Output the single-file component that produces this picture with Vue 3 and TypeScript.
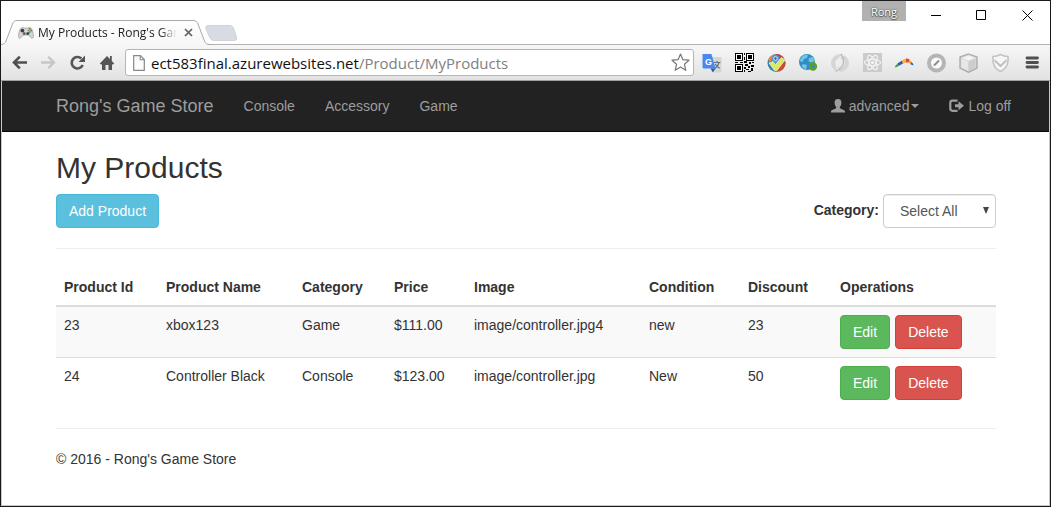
<script setup lang="ts">
import { ref } from 'vue'

interface Product {
  id: number
  name: string
  category: string
  price: string
  image: string
  condition: string
  discount: number
}

const navLinks: string[] = ['Console', 'Accessory', 'Game']
const category = ref<string>('Select All')
const categories: string[] = ['Select All', 'Console', 'Accessory', 'Game']
const columns: string[] = [
  'Product Id',
  'Product Name',
  'Category',
  'Price',
  'Image',
  'Condition',
  'Discount',
  'Operations',
]
const products: Product[] = [
  { id: 23, name: 'xbox123', category: 'Game', price: '$111.00', image: 'image/controller.jpg4', condition: 'new', discount: 23 },
  { id: 24, name: 'Controller Black', category: 'Console', price: '$123.00', image: 'image/controller.jpg', condition: 'New', discount: 50 },
]
</script>

<template>
  <div class="window">
    <header class="titlebar">
      <div class="tab">
        <svg class="tab-shape" width="212" height="25" viewBox="0 0 212 25">
          <defs>
            <linearGradient id="tabfill" x1="0" y1="0" x2="0" y2="1">
              <stop offset="0" stop-color="#fefefe" />
              <stop offset="1" stop-color="#f7f7f7" />
            </linearGradient>
          </defs>
          <path d="M0 24.5 C3 24.2 4 23.5 5 21 L11.500 4 C12.500 1.500 13.500 .5 16 .5 H192 C195 .5 196 1.500 197 4 L203.500 21 C204.500 23.500 206 24.500 209 24.500 V25 H0Z" fill="url(#tabfill)" />
          <path d="M0 24.500 C3 24.200 4 23.500 5 21 L11.500 4 C12.500 1.500 13.500 .5 16 .5 H192 C195 .5 196 1.500 197 4 L203.500 21 C204.500 23.500 206 24.500 209 24.500 H212" fill="none" stroke="#a9a9a9" />
        </svg>
        <div class="tab-content">
          <svg width="16" height="16" viewBox="0 0 16 16">
            <path d="M3.200 3 C4.500 2 5.500 3.200 8 3.200 S11.500 2 12.800 3 C14.500 4.500 15.600 9 15.500 11.500 C15.400 13.500 13.500 13.600 12.500 12.200 L10.800 10 H5.200 L3.500 12.200 C2.500 13.600 .6 13.500 .5 11.500 C.4 9 1.500 4.500 3.200 3Z" fill="#d5d5d5" stroke="#9a9a9a" stroke-width=".7" />
            <circle cx="4.400" cy="5.600" r="1.900" fill="#3f3f3f" />
            <circle cx="6.200" cy="8.600" r="1.500" fill="#666" />
            <circle cx="9.800" cy="8.600" r="1.500" fill="#444" />
            <circle cx="11.700" cy="3.900" r="1" fill="#e04a3a" />
            <circle cx="10.300" cy="5.500" r=".8" fill="#777" />
            <circle cx="13.200" cy="5.500" r="1" fill="#35a94a" />
            <circle cx="11.800" cy="7" r="1" fill="#35a94a" />
          </svg>
          <span class="tab-title">My Products - Rong's Game Store</span>
          <button class="tab-close" aria-label="Close tab">
            <svg width="9" height="9" viewBox="0 0 9 9"><path d="M1 1 8 8M8 1 1 8" stroke="#606060" stroke-width="1.700" /></svg>
          </button>
        </div>
      </div>
      <button class="new-tab" aria-label="New tab">
        <svg width="34" height="18" viewBox="0 0 34 18">
          <path d="M3 1.500 H25 Q27.500 1.500 28.500 4 L31.500 13 Q32.500 16.500 29.500 16.500 H9 Q6 16.500 5 14 L.9 5 Q0 1.500 3 1.500Z" fill="#d7dce4" stroke="#cfd3d8" />
        </svg>
      </button>
      <div class="window-controls">
        <button class="profile">Rong</button>
        <button class="control" aria-label="Minimize">
          <svg width="11" height="11" viewBox="0 0 11 11"><path d="M1 5.500H11" stroke="#000" /></svg>
        </button>
        <button class="control" aria-label="Maximize">
          <svg width="11" height="11" viewBox="0 0 11 11"><path d="M.5 .5H9.500V9.500H.5Z" fill="none" stroke="#000" /></svg>
        </button>
        <button class="control" aria-label="Close">
          <svg width="11" height="11" viewBox="0 0 11 11"><path d="M.5 .5 10.500 10.500M10.500 .5 .5 10.500" stroke="#000" /></svg>
        </button>
      </div>
    </header>

    <div class="toolbar">
      <div class="nav-buttons">
        <button class="tool" aria-label="Back">
          <svg width="16" height="16" viewBox="0 0 16 16"><path d="M15 7.500H2.500M7.800 1.700 2 7.500 7.800 13.300" fill="none" stroke="#4f4f4f" stroke-width="2.600" /></svg>
        </button>
        <button class="tool" aria-label="Forward">
          <svg width="16" height="16" viewBox="0 0 16 16"><path d="M0 7.500H12.500M7.200 1.700 13 7.500 7.200 13.300" fill="none" stroke="#c6c6c6" stroke-width="2.300" /></svg>
        </button>
        <button class="tool" aria-label="Reload">
          <svg width="16" height="16" viewBox="0 0 16 16">
            <path d="M12.700 10A5.700 5.700 0 1 1 11.300 3.500" fill="none" stroke="#555" stroke-width="2.600" />
            <path d="M15 .5V7H8.500Z" fill="#555" />
          </svg>
        </button>
        <button class="tool" aria-label="Home">
          <svg width="16" height="16" viewBox="0 0 16 16"><path d="M8 1 .8 8.500 2 9.500H3V15H6.500V10H9.500V15H13V9.500H14L15.200 8.500 12.800 6V1H11V4.100Z" fill="#555" /></svg>
        </button>
      </div>
      <div class="address">
        <svg width="12" height="16" viewBox="0 0 12 16"><path d="M.7 .7H7.500L11.300 4.500V15.300H.7Z" fill="#fcfcfc" stroke="#888" stroke-width="1.200" /><path d="M7.200 .9V4.800H11.200" fill="none" stroke="#888" stroke-width="1.100" /></svg>
        <div class="url"><span class="host">ect583final.azurewebsites.net</span>/Product/MyProducts</div>
        <button class="star" aria-label="Bookmark this page">
          <svg width="19" height="19" viewBox="0 0 19 19"><path d="M9.500 1 11.900 6.700 18 7.200 13.400 11.200 14.800 17.300 9.500 14 4.200 17.300 5.600 11.200 1 7.200 7.100 6.700Z" fill="#fff" stroke="#777" stroke-width="1.200" stroke-linejoin="round" /></svg>
        </button>
      </div>
      <div class="extensions">
        <button class="extension" aria-label="Translate">
          <svg width="20" height="20" viewBox="0 0 20 20">
            <path d="M8 4H18.500Q19.500 4 19.500 5V19.500H12Z" fill="#d6d6d6" />
            <path d="M12 9.500H18.500M15.200 8V9.500M17 9.700Q15.700 14 12.500 15.500M13.200 11Q15 14 17.700 15.300" fill="none" stroke="#5d7484" stroke-width="1.200" />
            <path d="M1 1H9.500L13.500 15.500H2Q.5 15.500 .5 14V1.500Z" fill="#4a88ee" />
            <path d="M8.500 15.500H13.500L10.800 19.500Z" fill="#2e57a8" />
            <text class="glyph-g" x="3" y="12">G</text>
          </svg>
        </button>
        <button class="extension" aria-label="QR code">
          <svg width="20" height="20" viewBox="0 0 20 20" shape-rendering="crispEdges">
            <path d="M1 0H9V8H1ZM12 0H20V8H12ZM1 11H9V19H1Z" fill="#000" />
            <path d="M2 1H8V7H2ZM13 1H19V7H13ZM2 12H8V18H2Z" fill="#fff" />
            <path d="M3 2H7V6H3ZM14 2H18V6H14ZM3 13H7V17H3ZM10 0H11V2H10ZM10 4H11V7H10ZM1 9H4V10H1ZM6 9H9V10H6ZM10 8H13V10H10ZM15 9H17V11H15ZM18 9H20V10H18ZM11 11H14V13H11ZM17 12H20V14H17ZM14 13H16V15H14ZM10 14H12V16H10ZM12 16H15V17H12ZM17 15H19V18H17ZM10 17H11V19H10ZM14 18H17V19H14Z" fill="#000" />
          </svg>
        </button>
        <button class="extension" aria-label="Checker">
          <svg width="20" height="20" viewBox="0 0 20 20">
            <circle cx="10.500" cy="10" r="9" fill="#347fae" />
            <path d="M9 1.200A9 9 0 0 1 19 7L16 17A9 9 0 0 0 19.400 9L15 5Z" fill="#c7452f" />
            <path d="M15 3.300A9 9 0 0 1 14 18.200L10 17Z" fill="#cf4a2e" />
            <path d="M2 7A9 9 0 0 1 8 1.500L7 5 4 9Z" fill="#e58b35" />
            <circle cx="9.500" cy="6" r="4" fill="#5a94cf" />
            <circle cx="9.500" cy="5.500" r="1.800" fill="#2f63a2" stroke="#e4f0fb" />
            <path d="M3 10 7 8.500 9.500 11.500 15.500 4.500 19 7 10.500 18 8 17Z" fill="#dbe86a" stroke="#f2f7c8" stroke-width=".7" />
          </svg>
        </button>
        <button class="extension" aria-label="Globe">
          <svg width="20" height="20" viewBox="0 0 20 20">
            <circle cx="9" cy="9" r="8" fill="#2f8fc4" />
            <path d="M4 3.500Q7 1 10 2L9 5 6 6 4.500 9 1.500 8ZM11 5 15 4 16.500 8 13 10 10.500 8ZM5 11 9 12 8 16.500Q5 16 3.500 13Z" fill="#72c4e6" />
            <circle cx="15" cy="13.500" r="3" fill="#2f8fc4" stroke="#5f9e28" stroke-width="2.300" />
            <path d="M10.500 10 15 9 13.500 13Z" fill="#5f9e28" />
          </svg>
        </button>
        <button class="extension" aria-label="Swirl">
          <svg width="20" height="20" viewBox="0 0 20 20">
            <circle cx="10" cy="10" r="6.800" fill="none" stroke="#d6d6d6" stroke-width="4.400" />
            <path d="M15 1.500Q7.500 4 6.500 11 6 15 9 19" fill="none" stroke="#f0f0f0" stroke-width="1.300" />
            <path d="M5.500 18.500Q12.500 16 13.500 9 14 5 11 1" fill="none" stroke="#b9b9b9" stroke-width="1.300" />
          </svg>
        </button>
        <button class="extension" aria-label="React">
          <svg width="20" height="20" viewBox="0 0 20 20">
            <rect x="1" y="0" width="19" height="19" fill="#cbcbcb" />
            <g fill="none" stroke="#f5f5f5" stroke-width="1.100">
              <ellipse cx="10.500" cy="9.500" rx="8" ry="3.200" />
              <ellipse cx="10.500" cy="9.500" rx="8" ry="3.200" transform="rotate(60 10.500 9.500)" />
              <ellipse cx="10.500" cy="9.500" rx="8" ry="3.200" transform="rotate(120 10.500 9.500)" />
            </g>
            <circle cx="10.500" cy="9.500" r="1.600" fill="#f5f5f5" />
          </svg>
        </button>
        <button class="extension" aria-label="Boomerang">
          <svg width="20" height="20" viewBox="0 0 20 20">
            <path d="M1 14.500Q1 12.500 3.500 10.500L5 12.800Q3 14.500 1 14.500Z" fill="#43a047" />
            <path d="M3.500 10.500 8 7.500 9 10.500 5 12.800Z" fill="#1b5fb0" />
            <path d="M8 7.500Q10 6 12 5.500L12 9.500 9 10.500Z" fill="#f2b632" />
            <path d="M12 5.500Q14 5.200 15.500 6.500L14.500 9.500 12 9.500Z" fill="#e2472f" />
            <path d="M15.500 6.500 17.500 9 16.500 11.300 14.500 9.500Z" fill="#f2a02c" />
            <path d="M17.500 9Q19.500 10.500 19.500 12.500L16.500 11.300Z" fill="#1b5fb0" />
          </svg>
        </button>
        <button class="extension" aria-label="Compass">
          <svg width="20" height="20" viewBox="0 0 20 20">
            <circle cx="10.500" cy="10" r="7.500" fill="#fafafa" stroke="#b5b5b5" stroke-width="4" />
            <path d="M8 12.500 13 7.500" stroke="#8d8d8d" stroke-width="2" />
          </svg>
        </button>
        <button class="extension" aria-label="Box">
          <svg width="20" height="20" viewBox="0 0 20 20">
            <path d="M10.500 1 19 4V15L10.500 19.300 2 15V4Z" fill="#dadada" stroke="#a8a8a8" stroke-width="1.300" />
            <path d="M10.500 2.500 17 5 10.500 7.500 4 5Z" fill="#f3f3f3" />
            <path d="M10.500 8.500 17.500 5.500V14.500L10.500 18Z" fill="#cdcdcd" />
            <path d="M9.800 8.500 3.500 5.800V14.300L9.800 17.500Z" fill="#e7e7e7" />
          </svg>
        </button>
        <button class="extension" aria-label="Shield">
          <svg width="20" height="20" viewBox="0 0 20 20">
            <path d="M10.500 1.500Q14 3.500 18 3.500V8Q17.500 15 10.500 18.500 3.500 15 3 8V3.500Q7 3.500 10.500 1.500Z" fill="#f6f6f6" stroke="#c2c2c2" stroke-width="1.600" />
            <path d="M4.500 6 10.500 11.500 16.500 6V8.500L10.500 14.500 4.500 8.500Z" fill="#c0c0c0" />
          </svg>
        </button>
        <button class="extension" aria-label="Menu">
          <svg width="14" height="14" viewBox="0 0 14 14"><path d="M2 2H12.500M2 6.500H12.500M2 11H12.500" stroke="#505050" stroke-width="2.800" stroke-linecap="round" /></svg>
        </button>
      </div>
    </div>

    <div class="page">
      <nav class="navbar">
        <div class="container navbar-inner">
          <a class="brand" href="#">Rong's Game Store</a>
          <a v-for="link in navLinks" :key="link" class="nav-link" href="#">{{ link }}</a>
          <div class="navbar-right">
            <a class="nav-link with-icon" href="#">
              <svg width="14" height="14" viewBox="0 0 14 14"><path d="M7 0C9.500 0 10.500 1.600 10.400 4 10.300 6 9.600 7.300 8.800 8V9.200C10.500 10.200 14 10.800 14 12.500V13.500H0V12.500C0 10.800 3.500 10.200 5.200 9.200V8C4.400 7.300 3.700 6 3.600 4 3.500 1.600 4.500 0 7 0Z" fill="currentColor" /></svg>
              <span>advanced</span><i class="caret"></i>
            </a>
            <a class="nav-link with-icon" href="#">
              <svg width="15" height="14" viewBox="0 0 15 14">
                <path d="M8.500 1.600H3.500Q1.300 1.600 1.300 3.800V9.600Q1.300 11.800 3.500 11.800H8.500" fill="none" stroke="currentColor" stroke-width="2.200" />
                <path d="M6 5.200H9.500V2.200L15 6.700 9.500 11.200V8.200H6Z" fill="currentColor" />
              </svg>
              <span>Log off</span>
            </a>
          </div>
        </div>
      </nav>

      <main class="container">
        <h2>My Products</h2>
        <div class="actions">
          <button class="btn info">Add Product</button>
          <div class="filter">
            <label for="category">Category:</label>
            <div class="select-wrap">
              <select id="category" v-model="category">
                <option v-for="c in categories" :key="c">{{ c }}</option>
              </select>
              <svg class="select-arrow" width="6" height="7" viewBox="0 0 6 7"><path d="M0 0H6L3 7Z" fill="#444" /></svg>
            </div>
          </div>
        </div>
        <hr />
        <table>
          <colgroup>
            <col class="c-id" /><col class="c-name" /><col class="c-category" /><col class="c-price" />
            <col class="c-image" /><col class="c-condition" /><col class="c-discount" /><col />
          </colgroup>
          <thead>
            <tr><th v-for="c in columns" :key="c" scope="col">{{ c }}</th></tr>
          </thead>
          <tbody>
            <tr v-for="p in products" :key="p.id">
              <td>{{ p.id }}</td>
              <td>{{ p.name }}</td>
              <td>{{ p.category }}</td>
              <td>{{ p.price }}</td>
              <td>{{ p.image }}</td>
              <td>{{ p.condition }}</td>
              <td>{{ p.discount }}</td>
              <td>
                <div class="operations">
                  <button class="btn success">Edit</button>
                  <button class="btn danger">Delete</button>
                </div>
              </td>
            </tr>
          </tbody>
        </table>
        <hr />
        <footer>© 2016 - Rong's Game Store</footer>
      </main>
    </div>
  </div>
</template>

<style>
body {
  margin: 0;
}
</style>

<style scoped>
* {
  box-sizing: border-box;
}
.window {
  display: flex;
  flex-direction: column;
  min-height: 100vh;
  border: 1px solid #1b191c;
  background: #fff;
  color: #333;
  font-family: "Liberation Sans", Arial, sans-serif;
  font-size: 14px;
  line-height: 20px;
}
button {
  font-family: inherit;
  border: 0;
  padding: 0;
  background: none;
}
svg {
  display: block;
  flex: none;
}
a {
  text-decoration: none;
}

/* Browser chrome */
.titlebar {
  display: flex;
  height: 43px;
  align-items: flex-end;
}
.tab {
  position: relative;
  z-index: 1;
  width: 212px;
  height: 25px;
  margin-bottom: -1px;
}
.tab-shape {
  position: absolute;
  inset: 0;
}
.tab-content {
  position: relative;
  display: flex;
  align-items: center;
  height: 25px;
  padding: 0 18px 0 17px;
}
.tab-title {
  width: 139px;
  margin-left: 4px;
  overflow: hidden;
  white-space: nowrap;
  font-family: "Open Sans", "Noto Sans", sans-serif;
  font-size: 12px;
  color: #222;
  mask-image: linear-gradient(to right, #000 88%, transparent);
}
.tab-close {
  margin-left: 7px;
}
.new-tab {
  margin: 0 0 2px -8px;
  z-index: 2;
}
.window-controls {
  display: flex;
  align-self: flex-start;
  margin-left: auto;
}
.profile {
  width: 44px;
  height: 20px;
  margin-right: 6px;
  background: #b1b1b1;
  color: #fff;
  font-family: "Open Sans", "Noto Sans", sans-serif;
  font-size: 11px;
  text-shadow: 0 0 2px #333, 0 1px 1px #555;
}
.control {
  display: grid;
  place-items: center;
  width: 46px;
  height: 28px;
}
.toolbar {
  display: flex;
  align-items: center;
  height: 37px;
  padding: 0 2px 0 4px;
  border-top: 1px solid #b3b3b3;
  border-bottom: 1px solid #a0a0a0;
  background: linear-gradient(#f7f7f7, #e2e2e2);
}
.nav-buttons,
.extensions {
  display: flex;
}
.tool {
  display: grid;
  place-items: center;
  width: 29px;
  height: 28px;
}
.address {
  display: flex;
  flex: 1;
  align-items: center;
  height: 27px;
  margin: 0 2px 0 4px;
  padding: 0 3px 0 7px;
  border: 1px solid #b5b5b5;
  border-radius: 3px;
  background: #fff;
}
.url {
  flex: 1;
  margin-left: 6px;
  font-family: "Open Sans", "Noto Sans", sans-serif;
  font-size: 15px;
  white-space: nowrap;
  color: #808080;
}
.host {
  color: #111;
}
.extension {
  display: grid;
  place-items: center;
  width: 32px;
  height: 28px;
}
.glyph-g {
  font-family: "Liberation Sans", Arial, sans-serif;
  font-size: 9px;
  font-weight: bold;
  fill: #fff;
}

/* Store page */
.page {
  flex: 1;
  border: 1px solid #c9c9c9;
  border-top: 0;
}
.container {
  max-width: 971px;
  margin: 0 auto;
  padding: 0 15px 0 16px;
}
.navbar {
  background: #222;
  border-bottom: 1px solid #080808;
}
.navbar-inner {
  display: flex;
  align-items: center;
  height: 50px;
}
.brand {
  margin-right: 15px;
  font-size: 18px;
  color: #9d9d9d;
}
.nav-link {
  padding: 15px;
  color: #9d9d9d;
}
.navbar-right {
  display: flex;
  margin: 0 -30px 0 auto;
}
.with-icon {
  display: flex;
  align-items: center;
}
.with-icon span {
  margin-left: 4px;
}
.caret {
  margin-left: 2px;
  border-top: 4px solid;
  border-left: 4px solid transparent;
  border-right: 4px solid transparent;
}
h2 {
  margin: 0 0 10px;
  padding-top: 19px;
  font-size: 30px;
  font-weight: 400;
  line-height: 33px;
}
.actions,
.filter {
  display: flex;
  justify-content: space-between;
}
.filter label {
  margin: 6px 4px 0 0;
  font-weight: 700;
}
.select-wrap {
  position: relative;
}
select {
  appearance: none;
  width: 113px;
  height: 34px;
  padding: 6px 16px;
  border: 1px solid #ccc;
  border-radius: 4px;
  background: #fff;
  box-shadow: inset 0 1px 1px rgba(0, 0, 0, 0.075);
  color: #555;
  font-family: inherit;
  font-size: 14px;
  line-height: 20px;
}
.select-arrow {
  position: absolute;
  top: 13px;
  right: 7px;
  pointer-events: none;
}
.btn {
  height: 34px;
  padding: 0 12px;
  border: 1px solid;
  border-radius: 4px;
  color: #fff;
  font-size: 14px;
  line-height: 20px;
}
.info {
  background: #5bc0de;
  border-color: #46b8da;
}
.success {
  background: #5cb85c;
  border-color: #4cae4c;
}
.danger {
  background: #d9534f;
  border-color: #d43f3a;
}
hr {
  margin: 20px 0;
  border: 0;
  border-top: 1px solid #eee;
}
table {
  width: 100%;
  table-layout: fixed;
  border-collapse: collapse;
}
.c-id {
  width: 102px;
}
.c-name {
  width: 136px;
}
.c-category,
.c-discount {
  width: 92px;
}
.c-price {
  width: 80px;
}
.c-image {
  width: 175px;
}
.c-condition {
  width: 99px;
}
th,
td {
  padding: 8px;
  text-align: left;
  vertical-align: top;
}
th {
  border-bottom: 2px solid #ddd;
}
td {
  border-top: 1px solid #ddd;
}
tbody tr:nth-child(odd) {
  background: #f9f9f9;
}
.operations {
  display: flex;
  gap: 5px;
}
</style>
